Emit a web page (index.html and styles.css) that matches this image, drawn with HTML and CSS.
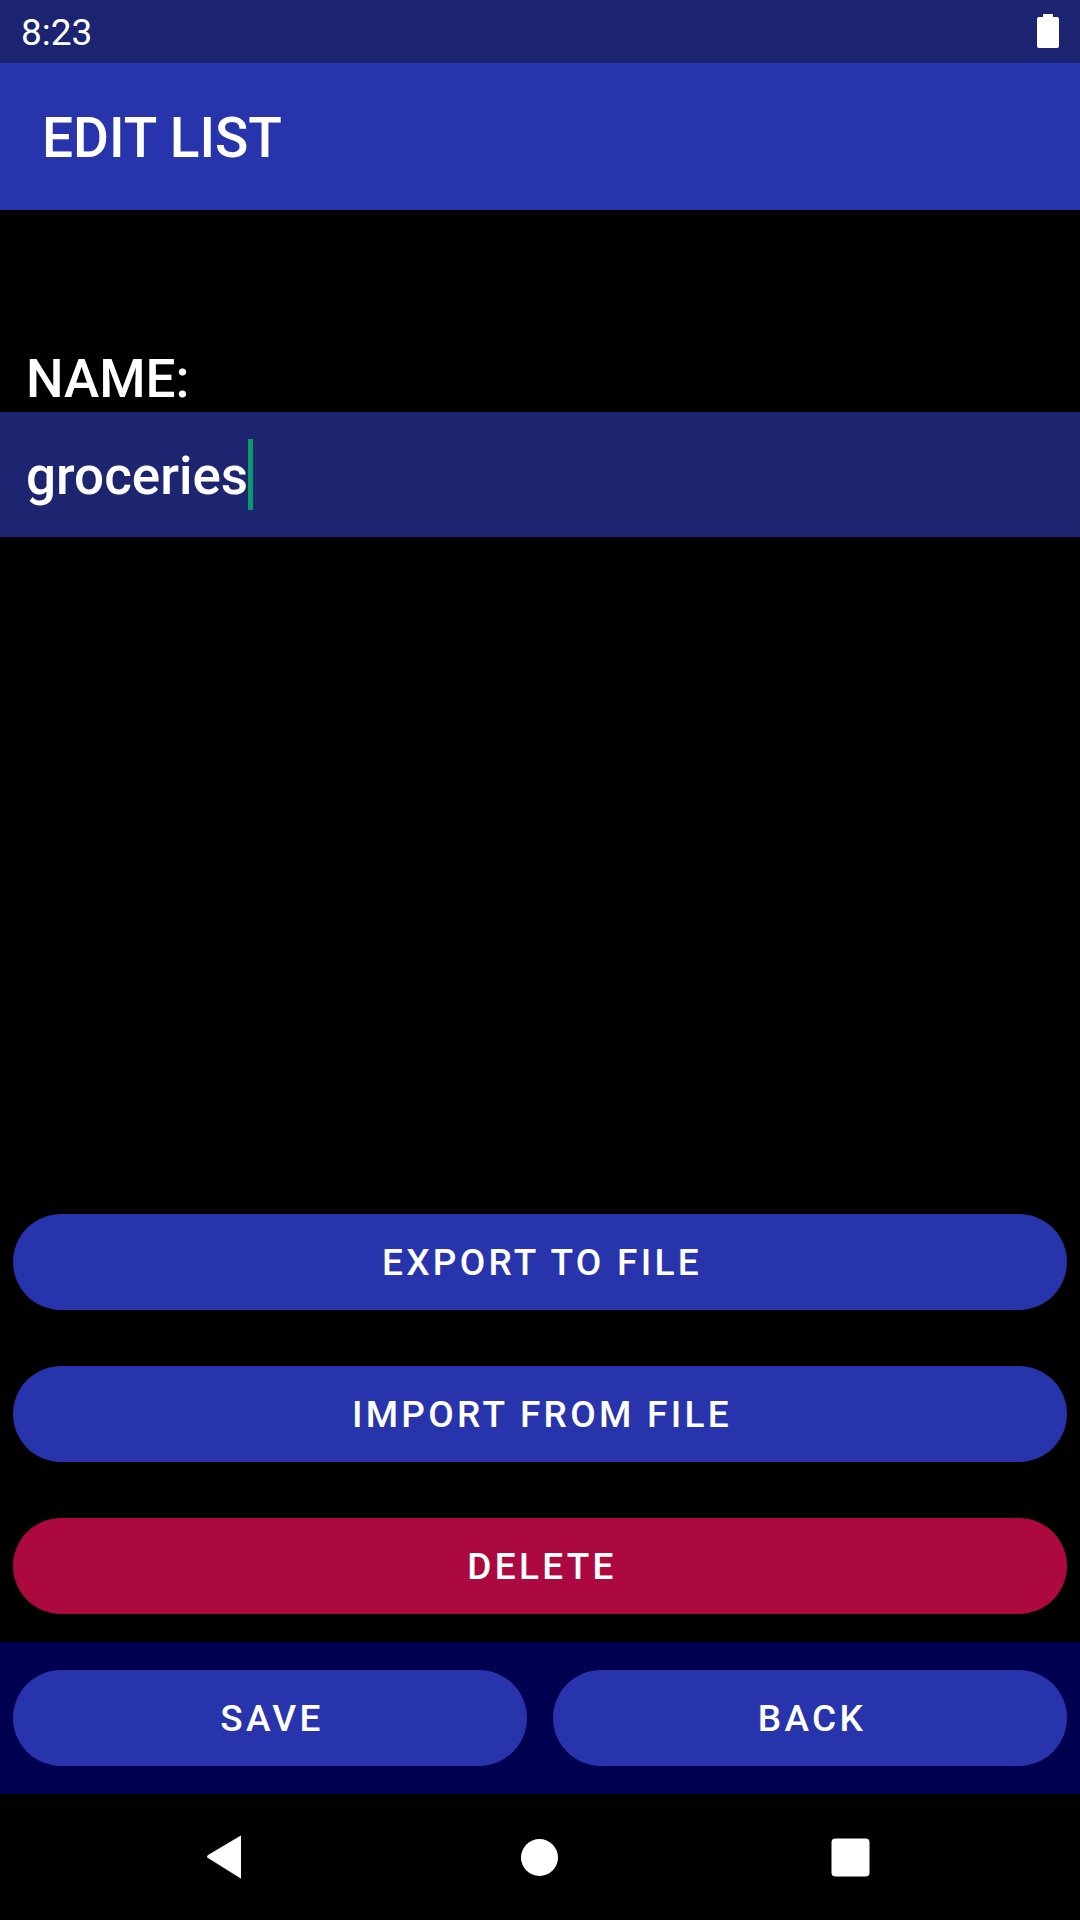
FILE: index.html
```html
<!DOCTYPE html>
<html>
<head>
<meta charset="utf-8">
<link rel="stylesheet" href="styles.css">
</head>
<body>
<div class="screen">
  <div class="status-bar">
    <span class="time">8:23</span>
    <svg class="battery" width="22" height="34" viewBox="0 0 22 34"><rect x="6" y="0" width="10" height="4" rx="1" fill="#fff"/><rect x="0" y="3" width="22" height="31" rx="2" fill="#fff"/></svg>
  </div>
  <div class="app-bar"><span class="title">EDIT LIST</span></div>
  <div class="content">
    <div class="form">
      <div class="label">NAME:</div>
      <div class="field"><span class="value">groceries</span><span class="cursor"></span></div>
    </div>
    <div class="actions">
      <button class="btn">EXPORT TO FILE</button>
      <button class="btn">IMPORT FROM FILE</button>
      <button class="btn danger">DELETE</button>
    </div>
  </div>
  <div class="bottom-bar">
    <button class="btn">SAVE</button>
    <button class="btn">BACK</button>
  </div>
  <div class="nav-bar">
    <svg class="nav-icon" width="40" height="44" viewBox="0 0 40 44"><path d="M36 1 L36 43 Q36 44 35 43 L3 23 Q1 22 3 20 L35 1 Q36 0 36 1 Z" fill="#fff"/></svg>
    <svg class="nav-icon" width="40" height="40" viewBox="0 0 40 40"><circle cx="20" cy="20" r="19" fill="#fff"/></svg>
    <svg class="nav-icon" width="40" height="40" viewBox="0 0 40 40"><rect x="0.5" y="0.5" width="39" height="39" rx="4" fill="#fff"/></svg>
  </div>
</div>
</body>
</html>
```
FILE: styles.css
```css
* { box-sizing: border-box; }
html, body { margin: 0; padding: 0; background: #000; }
body { font-family: Roboto, "Noto Sans", sans-serif; color: #fff; }
.screen { width: 1080px; height: 1920px; display: flex; flex-direction: column; background: #000; }
.status-bar { height: 63px; background: #1c2371; display: flex; align-items: center; justify-content: space-between; padding: 0 21px 0 21px; }
.time { font-size: 37px; font-weight: 400; line-height: 1; margin-top: 2px; }
.battery { margin-top: -2px; }
.app-bar { height: 147px; background: #2834ab; display: flex; align-items: center; padding-left: 42px; }
.title { font-size: 55px; font-weight: 500; line-height: 1; margin-top: 4px; }
.content { flex: 1; display: flex; flex-direction: column; justify-content: space-between; }
.form { padding-top: 137px; }
.label { font-size: 53px; font-weight: 500; line-height: 64px; padding-left: 26px; height: 65px; }
.field { height: 125px; background: #1d2470; display: flex; align-items: center; padding-left: 26px; }
.value { font-size: 53px; font-weight: 500; line-height: 64px; margin-top: 3px; }
.cursor { width: 5px; height: 71px; background: #0d9a6a; }
.actions { display: flex; flex-direction: column; gap: 56px; padding: 0 13px 28px 13px; }
.btn { height: 96px; border: none; border-radius: 48px; background: #2834ab; color: #fff; font-family: Roboto, "Noto Sans", sans-serif; font-size: 37px; font-weight: 500; letter-spacing: 3.3px; padding: 0 0 0 4px; width: 100%; }
.btn.danger { background: #ab0940; }
.bottom-bar { height: 152px; background: #000050; display: flex; gap: 26px; padding: 28px 13px; }
.bottom-bar .btn { flex: 1; }
.nav-bar { height: 126px; position: relative; }
.nav-icon:nth-child(1) { position: absolute; left: 205px; top: 41px; }
.nav-icon:nth-child(2) { position: absolute; left: 520px; top: 44px; width: 39px; height: 39px; }
.nav-icon:nth-child(3) { position: absolute; left: 831px; top: 44px; width: 39px; height: 39px; }
```
